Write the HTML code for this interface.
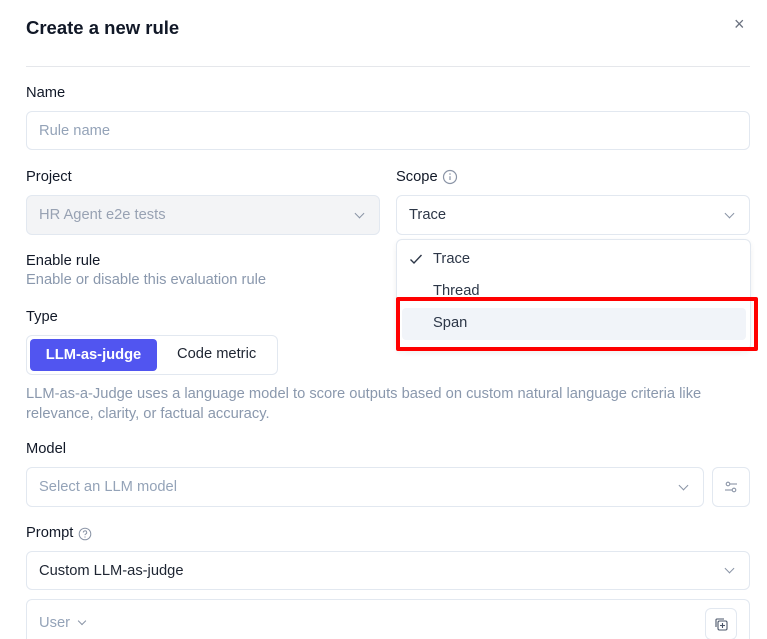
<!DOCTYPE html>
<html style="overflow:hidden;height:639px"><head><meta charset="utf-8"><style>
*{box-sizing:border-box;margin:0;padding:0}
body{width:767px;height:639px;overflow:hidden;background:#fff;font-family:"Liberation Sans",sans-serif;color:#1f2937;position:relative;font-size:14.7px}
.a{position:absolute}
.lbl{font-size:14.7px;font-weight:500;color:#111827}
.box{position:absolute;border:1px solid #e2e8f0;border-radius:6px;background:#fff}
.ph{font-size:14.7px;color:#94a3b8}
.chev{position:absolute;width:7px;height:7px;border-right:1.3px solid #8a94a6;border-bottom:1.3px solid #8a94a6;transform:rotate(45deg)}
</style></head><body>
<div class="a" style="left:26px;top:17px;font-size:18.5px;font-weight:600;color:#111827">Create a new rule</div>
<div class="a" style="left:734px;top:14px;font-size:18px;color:#6b7280">×</div>
<div class="a" style="left:26px;top:66px;width:724px;height:1px;background:#e5e7eb"></div>

<div class="a lbl" style="left:26px;top:85px">Name</div>
<div class="box" style="left:26px;top:111px;width:724px;height:39px"><span class="a ph" style="left:12px;top:11px">Rule name</span></div>

<div class="a lbl" style="left:26px;top:169px">Project</div>
<div class="box" style="left:26px;top:195px;width:354px;height:40px;background:#f3f4f6"><span class="a ph" style="left:12px;top:11px;color:#98a2b3">HR Agent e2e tests</span><span class="chev" style="left:329px;top:14px"></span></div>

<div class="a lbl" style="left:396px;top:169px">Scope</div>
<svg class="a" style="left:442px;top:169px" width="16" height="16" viewBox="0 0 16 16"><circle cx="8" cy="8" r="6.5" fill="none" stroke="#8a94a6" stroke-width="1.2"/><line x1="8" y1="7.2" x2="8" y2="11" stroke="#8a94a6" stroke-width="1.2"/><circle cx="8" cy="5" r=".8" fill="#8a94a6"/></svg>
<div class="box" style="left:396px;top:195px;width:354px;height:40px"><span class="a" style="left:12px;top:11px;color:#2d3748">Trace</span><span class="chev" style="left:329px;top:14px"></span></div>

<div class="box" style="left:396px;top:239px;width:355px;height:112px;box-shadow:0 2px 6px rgba(0,0,0,.06)"></div>
<svg class="a" style="left:409px;top:253px" width="14" height="12" viewBox="0 0 14 12"><path d="M1.5 6.5 L5 10 L12.5 2" fill="none" stroke="#2d3748" stroke-width="1.4"/></svg>
<div class="a" style="left:433px;top:251px;color:#2d3748">Trace</div>
<div class="a" style="left:433px;top:283px;color:#2d3748">Thread</div>
<div class="a" style="left:402px;top:308px;width:344px;height:32px;background:#f1f4f9;border-radius:4px"></div>
<div class="a" style="left:433px;top:315px;color:#2d3748">Span</div>
<div class="a" style="left:396px;top:297px;width:362px;height:54px;border:4px solid #ff0000;border-radius:2px"></div>

<div class="a lbl" style="left:26px;top:253px">Enable rule</div>
<div class="a" style="left:26px;top:272px;color:#8a98ad">Enable or disable this evaluation rule</div>

<div class="a lbl" style="left:26px;top:309px">Type</div>
<div class="box" style="left:26px;top:335px;width:252px;height:40px"></div>
<div class="a" style="left:30px;top:339px;width:127px;height:32px;background:#5155f0;border-radius:4px;color:#fff;font-weight:600;text-align:center;line-height:32px">LLM-as-judge</div>
<div class="a" style="left:177px;top:346px;color:#1e2532">Code metric</div>

<div class="a" style="left:26px;top:384px;line-height:20px;color:#8a98ad;width:700px">LLM-as-a-Judge uses a language model to score outputs based on custom natural language criteria like relevance, clarity, or factual accuracy.</div>

<div class="a lbl" style="left:26px;top:441px">Model</div>
<div class="box" style="left:26px;top:467px;width:678px;height:40px"><span class="a ph" style="left:12px;top:11px">Select an LLM model</span><span class="chev" style="left:653px;top:14px"></span></div>
<div class="box" style="left:712px;top:467px;width:38px;height:40px"><svg class="a" style="left:11px;top:12px" width="14" height="14" viewBox="0 0 14 14" fill="none" stroke="#8a94a6" stroke-width="1.1"><circle cx="4" cy="4" r="1.8"/><line x1="6" y1="4" x2="13" y2="4"/><circle cx="10" cy="10" r="1.8"/><line x1="1" y1="10" x2="8" y2="10"/></svg></div>

<div class="a lbl" style="left:26px;top:525px">Prompt</div>
<svg class="a" style="left:78px;top:527px" width="14" height="14" viewBox="0 0 14 14"><circle cx="7" cy="7" r="5.8" fill="none" stroke="#8a94a6" stroke-width="1"/><path d="M5.3 5.5 a1.7 1.7 0 1 1 2.3 1.6 c-.5.2-.6.5-.6 1" fill="none" stroke="#8a94a6" stroke-width="1"/><circle cx="7" cy="10" r=".6" fill="#8a94a6"/></svg>
<div class="box" style="left:26px;top:551px;width:724px;height:39px"><span class="a" style="left:12px;top:11px;color:#1e2532">Custom LLM-as-judge</span><span class="chev" style="left:699px;top:13px"></span></div>

<div class="box" style="left:26px;top:599px;width:724px;height:40px;border-bottom:none;border-radius:6px 6px 0 0"><span class="a ph" style="left:12px;top:15px">User</span><span class="chev" style="left:52px;top:18px;width:6px;height:6px"></span></div>
<div class="box" style="left:705px;top:608px;width:32px;height:32px"><svg class="a" style="left:8px;top:8px" width="15" height="15" viewBox="0 0 15 15" fill="none" stroke="#4a5568" stroke-width="1.1"><rect x="4" y="4" width="9" height="9" rx="1.5"/><path d="M2 10 V3 a1 1 0 0 1 1-1 H10"/><line x1="8.5" y1="6" x2="8.5" y2="11"/><line x1="6" y1="8.5" x2="11" y2="8.5"/></svg></div>
</body></html>
